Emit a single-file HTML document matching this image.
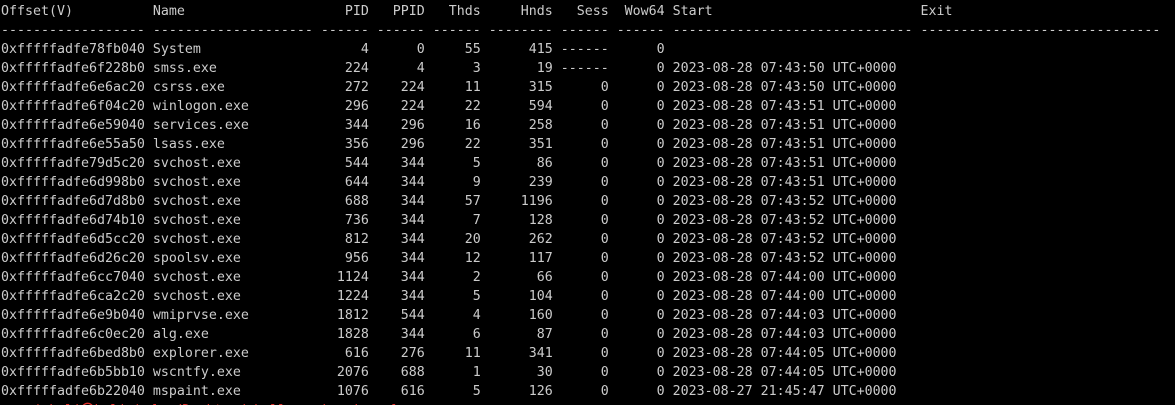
<!DOCTYPE html>
<html><head><meta charset="utf-8"><style>
html,body{margin:0;padding:0;background:#000;width:1175px;height:405px;overflow:hidden}
pre{margin:0;padding:2px 0 0 1px;font-family:"DejaVu Sans Mono","Liberation Mono",monospace;font-size:13.29px;line-height:19px;color:#cccccc;white-space:pre}
.r{color:#e0302a}.g{color:#3fbf3f}.b{color:#3b6fd8}
</style></head><body><pre>Offset(V)          Name                    PID   PPID   Thds     Hnds   Sess  Wow64 Start                          Exit                          
------------------ -------------------- ------ ------ ------ -------- ------ ------ ------------------------------ ------------------------------
0xfffffadfe78fb040 System                    4      0     55      415 ------      0                                                               
0xfffffadfe6f228b0 smss.exe                224      4      3       19 ------      0 2023-08-28 07:43:50 UTC+0000                                 
0xfffffadfe6e6ac20 csrss.exe               272    224     11      315      0      0 2023-08-28 07:43:50 UTC+0000                                 
0xfffffadfe6f04c20 winlogon.exe            296    224     22      594      0      0 2023-08-28 07:43:51 UTC+0000                                 
0xfffffadfe6e59040 services.exe            344    296     16      258      0      0 2023-08-28 07:43:51 UTC+0000                                 
0xfffffadfe6e55a50 lsass.exe               356    296     22      351      0      0 2023-08-28 07:43:51 UTC+0000                                 
0xfffffadfe79d5c20 svchost.exe             544    344      5       86      0      0 2023-08-28 07:43:51 UTC+0000                                 
0xfffffadfe6d998b0 svchost.exe             644    344      9      239      0      0 2023-08-28 07:43:51 UTC+0000                                 
0xfffffadfe6d7d8b0 svchost.exe             688    344     57     1196      0      0 2023-08-28 07:43:52 UTC+0000                                 
0xfffffadfe6d74b10 svchost.exe             736    344      7      128      0      0 2023-08-28 07:43:52 UTC+0000                                 
0xfffffadfe6d5cc20 svchost.exe             812    344     20      262      0      0 2023-08-28 07:43:52 UTC+0000                                 
0xfffffadfe6d26c20 spoolsv.exe             956    344     12      117      0      0 2023-08-28 07:43:52 UTC+0000                                 
0xfffffadfe6cc7040 svchost.exe            1124    344      2       66      0      0 2023-08-28 07:44:00 UTC+0000                                 
0xfffffadfe6ca2c20 svchost.exe            1224    344      5      104      0      0 2023-08-28 07:44:00 UTC+0000                                 
0xfffffadfe6e9b040 wmiprvse.exe           1812    544      4      160      0      0 2023-08-28 07:44:03 UTC+0000                                 
0xfffffadfe6c0ec20 alg.exe                1828    344      6       87      0      0 2023-08-28 07:44:03 UTC+0000                                 
0xfffffadfe6bed8b0 explorer.exe            616    276     11      341      0      0 2023-08-28 07:44:05 UTC+0000                                 
0xfffffadfe6b5bb10 wscntfy.exe            2076    688      1       30      0      0 2023-08-28 07:44:05 UTC+0000                                 
0xfffffadfe6b22040 mspaint.exe            1076    616      5      126      0      0 2023-08-27 21:45:47 UTC+0000                                 
<span class="b">  </span><span class="r">  ( kali㉿kali )</span><span class="r">-[ ~/Desktop/challenge/memdump ]</span></pre></body></html>
